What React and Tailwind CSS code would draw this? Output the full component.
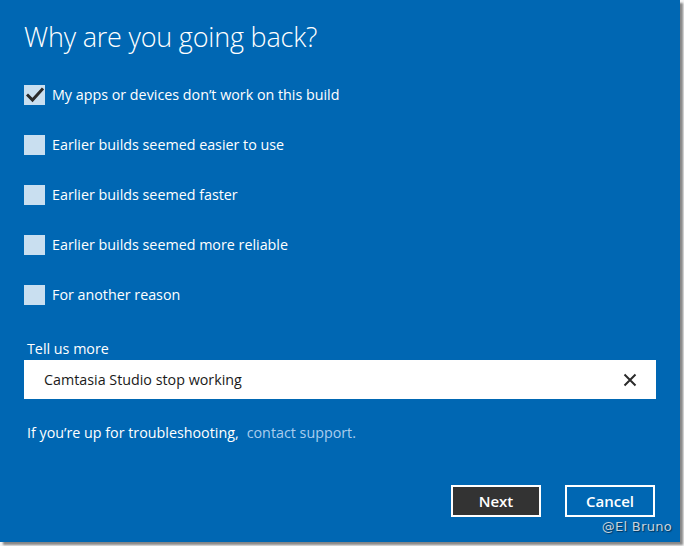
import React, { useState } from 'react';

const razones = [
  { id: 1, texto: 'My apps or devices don\u2019t work on this build', marcado: true },
  { id: 2, texto: 'Earlier builds seemed easier to use', marcado: false },
  { id: 3, texto: 'Earlier builds seemed faster', marcado: false },
  { id: 4, texto: 'Earlier builds seemed more reliable', marcado: false },
  { id: 5, texto: 'For another reason', marcado: false },
];

const Casilla = ({ marcado, texto, onToggle }) => (
  <button onClick={onToggle} className="flex items-center h-[50px] text-left">
    <span className="w-[21px] h-[20px] bg-[#c9dff0] flex items-center justify-center">
      {marcado && (
        <svg width="18" height="16" viewBox="0 0 18 16">
          <path d="M2 8.5 L6.5 13 L16 2.5" fill="none" stroke="#2b2b2b" strokeWidth="3" strokeLinecap="square" />
        </svg>
      )}
    </span>
    <span className="ml-[7px] text-[14.3px] text-white">{texto}</span>
  </button>
);

export default function App() {
  const [marcas, setMarcas] = useState(razones.map(r => r.marcado));
  const [comentario, setComentario] = useState('Camtasia Studio stop working');

  return (
    <div className="w-[684px] h-[546px] bg-[#f4f4f4] relative" style={{ fontFamily: '"Open Sans", "Noto Sans", sans-serif' }}>
      <div className="w-[680px] h-[542px] bg-[#0067b3] shadow-[3px_3px_2px_rgba(0,0,0,0.45)] flex flex-col px-[24px] relative">
        <h1 className="mt-[19px] text-[27px] leading-[36px] font-light text-white tracking-[-0.2px]">Why are you going back?</h1>
        <div className="mt-[15px] flex flex-col items-start">
          {razones.map((r, i) => (
            <Casilla
              key={r.id}
              texto={r.texto}
              marcado={marcas[i]}
              onToggle={() => setMarcas(marcas.map((m, j) => (j === i ? !m : m)))}
            />
          ))}
        </div>
        <label className="mt-[19px] ml-[3px] text-[14.3px] leading-[20px] text-white">Tell us more</label>
        <div className="mt-[1px] w-[632px] h-[39px] bg-white flex items-center pl-[20px] pr-[18px]">
          <input
            value={comentario}
            onChange={(e) => setComentario(e.target.value)}
            className="flex-1 outline-none text-[14.3px] text-[#1a1a1a] bg-transparent"
          />
          <button onClick={() => setComentario('')} className="w-[16px] h-[16px] flex items-center justify-center">
            <svg width="14" height="14" viewBox="0 0 14 14">
              <path d="M1.5 1.5 L12.5 12.5 M12.5 1.5 L1.5 12.5" stroke="#2b2b2b" strokeWidth="2" />
            </svg>
          </button>
        </div>
        <p className="mt-[24px] ml-[3px] text-[14.3px] leading-[20px] text-white">
          If you’re up for troubleshooting,
          <span className="ml-[8px] text-[#a9cdee]">contact support.</span>
        </p>
        <div className="mt-[42px] flex justify-end gap-[24px] pr-[1px]">
          <button className="w-[90px] h-[32px] bg-[#333333] border-2 border-white text-white text-[15px] font-semibold">Next</button>
          <button className="w-[90px] h-[32px] border-2 border-white text-white text-[15px] font-semibold">Cancel</button>
        </div>
        <span
          className="absolute right-[8px] bottom-[6px] text-[13px] text-[#c7d3de] tracking-[0.3px]"
          style={{ fontFamily: '"DejaVu Sans", sans-serif', textShadow: '1px 1px 1px rgba(0,0,0,0.5)' }}
        >
          @El Bruno
        </span>
      </div>
    </div>
  );
}
